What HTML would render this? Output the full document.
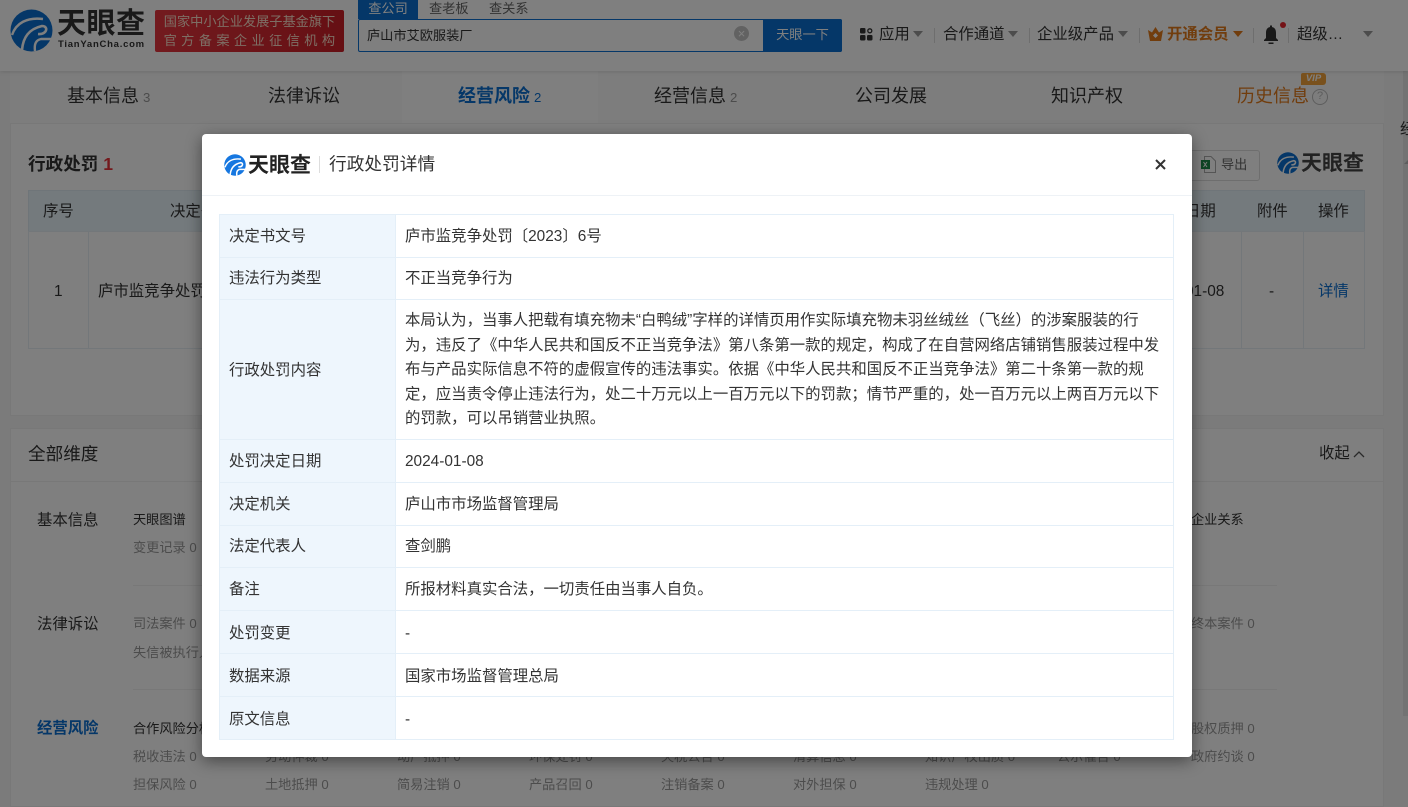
<!DOCTYPE html>
<html lang="zh">
<head>
<meta charset="utf-8">
<title>行政处罚详情</title>
<style>
*{box-sizing:border-box;margin:0;padding:0}
html,body{width:1408px;height:807px;overflow:hidden;background:#f6f6f6}
body{position:relative;font-family:"Liberation Sans","Noto Sans CJK SC",sans-serif;color:#333;font-size:15.4px}
.a{position:absolute;white-space:nowrap}
.hd{left:0;top:0;width:1408px;height:71px;background:#fff;box-shadow:0 1px 4px rgba(0,0,0,.12)}
.card{background:#fff;border:1px solid #f0f0f0}
.tab{font-size:18px;line-height:26px;top:83px;color:#333}
.tab i{font-style:normal;font-size:13.2px;color:#999;margin-left:4px}
.g{font-size:13.2px;color:#999;line-height:18px}
.k{font-size:13.2px;color:#333;line-height:18px}
.nav{font-size:15.4px;line-height:22px;top:24px;color:#333}
.tri{width:0;height:0;border-left:5px solid transparent;border-right:5px solid transparent;border-top:6px solid #999;top:31px}
.sep{width:1px;height:15px;background:#ddd;top:28px}
.ov{left:0;top:0;width:1408px;height:807px;background:rgba(0,0,0,.5)}
.modal{left:202px;top:134px;width:990px;height:623px;background:#fff;border-radius:4px;box-shadow:0 4px 16px rgba(0,0,0,.45)}
table{position:absolute;left:17px;top:80px;width:955px;border-collapse:collapse;table-layout:fixed;font-size:15.4px;color:#333}
td{border:1px solid #e4eff8;padding:2px 9px 0;vertical-align:middle;line-height:22px}
td.l{width:176px;background:#eef6fd}
td.p{line-height:24.5px;padding-top:2px}
tr.n td{padding-top:0}
tr.d td{padding-top:4px}
</style>
</head>
<body>
<!-- page below overlay -->
<div class="a" style="left:1403px;top:0;width:5px;height:716px;background:#e6e6e6"></div>
<div class="a card" style="left:10px;top:71px;width:1374px;height:345px"></div>
<div class="a" style="left:10px;top:71px;width:1374px;height:52px;background:#fafafa"></div>
<div class="a" style="left:402px;top:71px;width:196px;height:52px;background:#fff"></div>

<div class="a hd"></div>
<svg class="a" style="left:10px;top:9px" width="43" height="43" viewBox="0 0 43 43"><circle cx="21.5" cy="21.5" r="21" fill="#0b6fd1"/><path d="M2 26C6 14 17 8 33 10" stroke="#fff" stroke-width="2.4" fill="none"/><path d="M12 41C13 28 19 20 32 17 39 17 37 26 28 25" stroke="#fff" stroke-width="2.6" fill="none"/><path d="M25 42C24 35 26 31 31 30L43 30" stroke="#fff" stroke-width="2.4" fill="none"/></svg>
<div class="a" style="left:57px;top:5px;font-size:29px;font-weight:700;line-height:38px;color:#333;letter-spacing:.5px">天眼查</div>
<div class="a" style="left:58px;top:38px;font-size:9.5px;font-weight:700;line-height:13px;color:#333;letter-spacing:.75px">TianYanCha.com</div>
<div class="a" style="left:155px;top:10px;width:189px;height:42px;background:linear-gradient(90deg,#e5353e,#cc1f27);border-radius:2px;color:#fbdcc8;font-size:13.2px;line-height:19px;text-align:center;padding-top:2px">国家中小企业发展子基金旗下<br><span style="letter-spacing:4.4px;margin-right:-4px">官方备案企业征信机构</span></div>
<div class="a" style="left:358px;top:0;width:60px;height:19px;background:#0b6fd1;color:#fff;font-size:13.2px;line-height:17px;text-align:center">查公司</div>
<div class="a" style="left:429px;top:0;font-size:13.2px;line-height:17px;color:#666">查老板</div>
<div class="a" style="left:489px;top:0;font-size:13.2px;line-height:17px;color:#666">查关系</div>
<div class="a" style="left:358px;top:19px;width:484px;height:33px;border:1px solid #0b6fd1;border-radius:2px;background:#fff"></div>
<div class="a" style="left:367px;top:25px;font-size:13.2px;line-height:21px;color:#333">庐山市艾欧服装厂</div>
<div class="a" style="left:734px;top:26px;width:15px;height:15px;border-radius:50%;background:#c4c4c4;color:#fff;font-size:13px;line-height:15px;text-align:center">×</div>
<div class="a" style="left:763px;top:19px;width:79px;height:33px;background:#0b6fd1;border-radius:0 2px 2px 0;color:#fff;font-size:13.2px;line-height:32px;text-align:center">天眼一下</div>

<svg class="a" style="left:860px;top:28px" width="13" height="13" viewBox="0 0 13 13"><rect width="5.5" height="5.5" rx="1.2" fill="#333"/><rect y="7" width="5.5" height="5.5" rx="1.2" fill="#333"/><rect x="7" y="7" width="5.5" height="5.5" rx="1.2" fill="#333"/><circle cx="9.8" cy="2.8" r="2" fill="none" stroke="#333" stroke-width="1.3"/></svg>
<div class="a nav" style="left:879px">应用</div><div class="a tri" style="left:913px"></div><div class="a sep" style="left:934px"></div>
<div class="a nav" style="left:943px">合作通道</div><div class="a tri" style="left:1008px"></div><div class="a sep" style="left:1029px"></div>
<div class="a nav" style="left:1037px">企业级产品</div><div class="a tri" style="left:1118px"></div><div class="a sep" style="left:1139px"></div>
<svg class="a" style="left:1148px;top:27px" width="15" height="14" viewBox="0 0 15 14"><path d="M0 3L4 5.5 7.5 0 11 5.5 15 3 13 14H2z" fill="#e27a1a"/><path d="M7.5 6l2.500 2.500-2.500 2.500-2.500-2.500z" fill="#fff"/></svg>
<div class="a nav" style="left:1167px;font-weight:700;color:#e27a1a">开通会员</div><div class="a tri" style="left:1233px;border-top-color:#e27a1a"></div><div class="a sep" style="left:1253px"></div>
<svg class="a" style="left:1263px;top:25px" width="16" height="20" viewBox="0 0 16 20"><path d="M8 2C4 2 3 5 3 8V13L1 15V16H15V15L13 13V8C13 5 12 2 8 2Z" fill="#333"/><rect x="5.5" y="17.5" width="5" height="1.5" fill="#333"/><rect x="7" y=".5" width="2" height="2" fill="#333"/></svg>
<div class="a" style="left:1280px;top:22px;width:6px;height:6px;border-radius:50%;background:#e8242c"></div>
<div class="a sep" style="left:1288px"></div>
<div class="a nav" style="left:1297px">超级…</div><div class="a tri" style="left:1363px"></div>

<div class="a tab" style="left:67px">基本信息<i>3</i></div>
<div class="a tab" style="left:268px">法律诉讼</div>
<div class="a tab" style="left:458px;color:#0b6fd1;font-weight:700">经营风险<i style="color:#0b6fd1;font-weight:400">2</i></div>
<div class="a tab" style="left:654px">经营信息<i>2</i></div>
<div class="a tab" style="left:855px">公司发展</div>
<div class="a tab" style="left:1051px">知识产权</div>
<div class="a tab" style="left:1237px;color:#e27a1a">历史信息</div>
<div class="a" style="left:1312px;top:89px;width:16px;height:16px;border:1.5px solid #bbb;border-radius:50%;color:#bbb;font-size:11px;line-height:13px;text-align:center">?</div>
<div class="a" style="left:1301px;top:73px;width:25px;height:12px;background:#f2a33a;border-radius:2px 3px 3px 0;color:#fff;font-size:9.5px;font-weight:700;font-style:italic;line-height:12px;text-align:center">VIP</div>

<div class="a" style="left:1400px;top:120px;line-height:20px;color:#333">经</div>
<div class="a" style="left:1404px;top:160px;width:0;height:0;border-left:4px solid transparent;border-right:4px solid transparent;border-bottom:4px solid #bbb"></div>

<div class="a card" style="left:10px;top:123px;width:1374px;height:293px"></div>
<div class="a" style="left:28px;top:152px;font-size:17.6px;font-weight:700;line-height:24px;color:#333">行政处罚 <span style="color:#e8323a">1</span></div>
<div class="a" style="left:1186px;top:150px;width:74px;height:31px;border:1px solid #ddd;border-radius:3px;background:#fff"></div>
<svg class="a" style="left:1201px;top:156px" width="15" height="17" viewBox="0 0 15 17"><path d="M3.5 .5H10L14.5 5V16.5H3.5Z" fill="#fff" stroke="#aaa"/><rect y="4" width="9" height="9" fill="#1e8a4a"/><path d="M2.5 6l3.5 5M6 6l-3.500 5" stroke="#fff" stroke-width="1"/></svg>
<div class="a" style="left:1221px;top:155px;font-size:13.2px;line-height:19px;color:#666">导出</div>
<svg class="a" style="left:1277px;top:152px" width="22" height="22" viewBox="0 0 43 43"><circle cx="21.5" cy="21.5" r="21" fill="#0b6fd1"/><path d="M2 26C6 14 17 8 33 10" stroke="#fff" stroke-width="2.8" fill="none"/><path d="M12 41C13 28 19 20 32 17 39 17 37 26 28 25" stroke="#fff" stroke-width="3" fill="none"/><path d="M25 42C24 35 26 31 31 30L43 30" stroke="#fff" stroke-width="2.8" fill="none"/></svg>
<div class="a" style="left:1301px;top:149px;font-size:21px;font-weight:700;line-height:29px;color:#444">天眼查</div>

<div class="a" style="left:28px;top:190px;width:1337px;height:42px;background:#e9f4fb;border:1px solid #dfeaf3"></div>
<div class="a" style="left:28px;top:231px;width:1337px;height:118px;background:#fff;border:1px solid #e6eef4"></div>
<div class="a" style="left:88px;top:231px;width:1px;height:118px;background:#e6eef4"></div>
<div class="a" style="left:1241px;top:231px;width:1px;height:118px;background:#e6eef4"></div>
<div class="a" style="left:1303px;top:231px;width:1px;height:118px;background:#e6eef4"></div>
<div class="a" style="left:43px;top:202px;line-height:20px">序号</div>
<div class="a" style="left:170px;top:202px;line-height:20px">决定书文号</div>
<div class="a" style="left:1185px;top:202px;line-height:20px">日期</div>
<div class="a" style="left:1257px;top:202px;line-height:20px">附件</div>
<div class="a" style="left:1318px;top:202px;line-height:20px">操作</div>
<div class="a" style="left:54px;top:282px;line-height:20px">1</div>
<div class="a" style="left:98px;top:282px;line-height:20px">庐市监竞争处罚</div>
<div class="a" style="left:1185px;top:282px;line-height:20px">01-08</div>
<div class="a" style="left:1269px;top:282px;line-height:20px">-</div>
<div class="a" style="left:1318px;top:282px;line-height:20px;color:#0b6fd1">详情</div>

<div class="a card" style="left:10px;top:428px;width:1374px;height:379px"></div>
<div class="a" style="left:10px;top:481px;width:1374px;height:1px;background:#f0f0f0"></div>
<div class="a" style="left:28px;top:442px;font-size:17.6px;line-height:24px;color:#333">全部维度</div>
<div class="a" style="left:1319px;top:444px;line-height:20px;color:#333">收起</div>
<svg class="a" style="left:1353px;top:450px" width="12" height="8" viewBox="0 0 12 8"><path d="M1 7L6 2 11 7" fill="none" stroke="#555" stroke-width="1.3"/></svg>
<div class="a" style="left:133px;top:585px;width:1144px;height:1px;background:#f0f0f0"></div>
<div class="a" style="left:133px;top:689px;width:1144px;height:1px;background:#f0f0f0"></div>
<div class="a" style="left:37px;top:511px;line-height:20px">基本信息</div>
<div class="a" style="left:37px;top:615px;line-height:20px">法律诉讼</div>
<div class="a" style="left:37px;top:719px;line-height:20px;color:#0b6fd1;font-weight:700">经营风险</div>
<div class="a k" style="left:133px;top:511px">天眼图谱</div><div class="a k" style="left:1191px;top:511px">企业关系</div>
<div class="a g" style="left:133px;top:539px">变更记录 0</div>
<div class="a g" style="left:133px;top:615px">司法案件 0</div><div class="a g" style="left:1191px;top:615px">终本案件 0</div>
<div class="a g" style="left:133px;top:644px">失信被执行人 0</div>
<div class="a k" style="left:133px;top:720px">合作风险分析</div><div class="a g" style="left:1191px;top:720px">股权质押 0</div>
<div class="a g" style="left:133px;top:748px">税收违法 0</div><div class="a g" style="left:1191px;top:748px">政府约谈 0</div>
<div class="a g" style="left:265px;top:748px">劳动仲裁 0</div>
<div class="a g" style="left:397px;top:748px">动产抵押 0</div>
<div class="a g" style="left:529px;top:748px">环保处罚 0</div>
<div class="a g" style="left:661px;top:748px">欠税公告 0</div>
<div class="a g" style="left:793px;top:748px">清算信息 0</div>
<div class="a g" style="left:925px;top:748px">知识产权出质 0</div>
<div class="a g" style="left:1057px;top:748px">公示催告 0</div>
<div class="a g" style="left:133px;top:776px">担保风险 0</div>
<div class="a g" style="left:265px;top:776px">土地抵押 0</div>
<div class="a g" style="left:397px;top:776px">简易注销 0</div>
<div class="a g" style="left:529px;top:776px">产品召回 0</div>
<div class="a g" style="left:661px;top:776px">注销备案 0</div>
<div class="a g" style="left:793px;top:776px">对外担保 0</div>
<div class="a g" style="left:925px;top:776px">违规处理 0</div>

<div class="a ov"></div>

<!-- modal -->
<div class="a modal">
  <svg class="a" style="left:22px;top:20px" width="22" height="22" viewBox="0 0 43 43"><circle cx="21.5" cy="21.5" r="21" fill="#1677e0"/><path d="M2 26C6 14 17 8 33 10" stroke="#fff" stroke-width="2.8" fill="none"/><path d="M12 41C13 28 19 20 32 17 39 17 37 26 28 25" stroke="#fff" stroke-width="3" fill="none"/><path d="M25 42C24 35 26 31 31 30L43 30" stroke="#fff" stroke-width="2.8" fill="none"/></svg>
  <div class="a" style="left:46px;top:17px;font-size:21px;font-weight:700;line-height:29px;color:#222">天眼查</div>
  <div class="a" style="left:117px;top:22px;width:1px;height:17px;background:#ddd"></div>
  <div class="a" style="left:127px;top:17px;font-size:17.7px;line-height:27px;color:#333">行政处罚详情</div>
  <svg class="a" style="left:952px;top:24px" width="13" height="13" viewBox="0 0 13 13"><path d="M2 2L11 11M11 2L2 11" stroke="#333" stroke-width="2"/></svg>
  <div class="a" style="left:0;top:61px;width:990px;height:1px;background:#eef2f6"></div>
  <table>
    <tr style="height:43px"><td class="l">决定书文号</td><td>庐市监竞争处罚〔2023〕6号</td></tr>
    <tr class="n" style="height:42px"><td class="l">违法行为类型</td><td>不正当竞争行为</td></tr>
    <tr style="height:140px"><td class="l">行政处罚内容</td><td class="p">本局认为，当事人把载有填充物未“白鸭绒”字样的详情页用作实际填充物未羽丝绒丝（飞丝）的涉案服装的行<br>为，违反了《中华人民共和国反不正当竞争法》第八条第一款的规定，构成了在自营网络店铺销售服装过程中发<br>布与产品实际信息不符的虚假宣传的违法事实。依据《中华人民共和国反不正当竞争法》第二十条第一款的规<br>定，应当责令停止违法行为，处二十万元以上一百万元以下的罚款；情节严重的，处一百万元以上两百万元以下<br>的罚款，可以吊销营业执照。</td></tr>
    <tr style="height:43px"><td class="l">处罚决定日期</td><td>2024-01-08</td></tr>
    <tr style="height:43px"><td class="l">决定机关</td><td>庐山市市场监督管理局</td></tr>
    <tr class="n" style="height:42px"><td class="l">法定代表人</td><td>查剑鹏</td></tr>
    <tr style="height:43px"><td class="l">备注</td><td>所报材料真实合法，一切责任由当事人自负。</td></tr>
    <tr class="d" style="height:43px"><td class="l">处罚变更</td><td>-</td></tr>
    <tr class="d" style="height:43px"><td class="l">数据来源</td><td>国家市场监督管理总局</td></tr>
    <tr class="d" style="height:43px"><td class="l">原文信息</td><td>-</td></tr>
  </table>
</div>
</body>
</html>
